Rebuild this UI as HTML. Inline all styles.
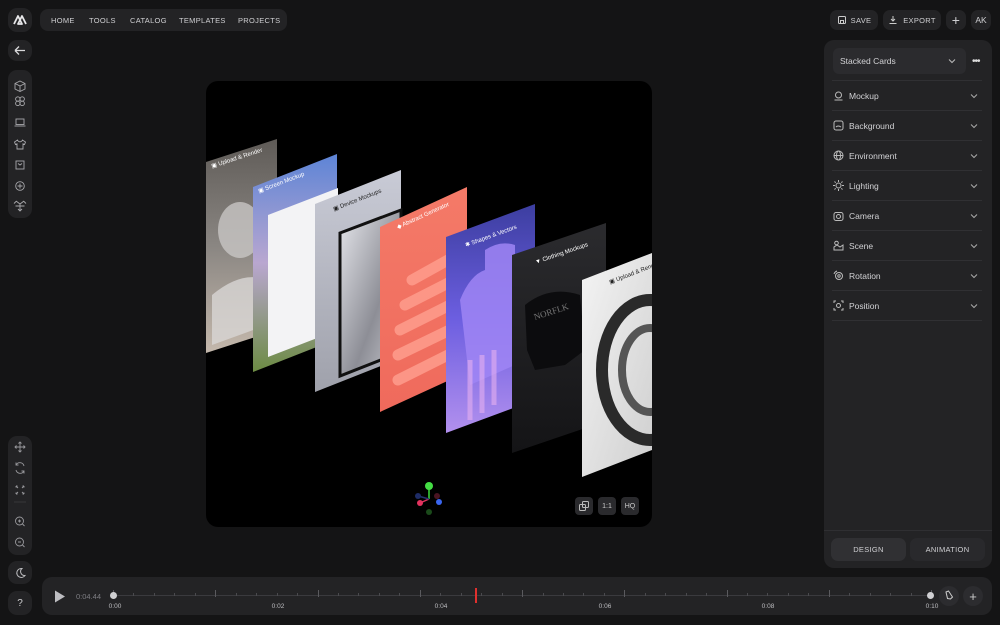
<!DOCTYPE html>
<html><head><meta charset="utf-8"><style>
*{margin:0;padding:0;box-sizing:border-box}
body{width:1000px;height:625px;background:#141415;font-family:"Liberation Sans",sans-serif;color:#c9c9cc;position:relative;overflow:hidden}
.box{position:absolute;background:#232325;border-radius:9px}
.nav{font-size:7.5px;letter-spacing:.3px;color:#cfcfd2;display:flex;align-items:center}
.row{position:absolute;left:832px;width:150px;height:30px;border-bottom:1px solid #303033;display:flex;align-items:center;font-size:8.5px;color:#d2d2d5}
.row svg.i{margin:0 5px 0 1px}
.row .ch{position:absolute;right:4px}
.lbl{position:absolute;top:603px;font-size:6.5px;color:#bdbdc0;transform:translateX(-50%)}
.tick{position:absolute;width:1px;background:#4a4a4e}
</style></head><body>

<div class="box" style="left:8px;top:8px;width:24px;height:24px"><svg width="24" height="24" viewBox="0 0 24 24"><path d="M6 16 L10 8 L12 12 M12 12 L14 8 L18 16 M10 16 L12 12 L14 16Z" stroke="#e8e8ea" stroke-width="1.8" fill="none" stroke-linejoin="round"/></svg></div>
<div class="box" style="left:8px;top:40px;width:24px;height:21px"><svg width="24" height="21"><path d="M7 10.5H17M7 10.5L11 6.5M7 10.5L11 14.5" stroke="#d8d8da" stroke-width="1.3" fill="none"/></svg></div>
<div class="box" style="left:8px;top:70px;width:24px;height:148px">
 <svg width="24" height="148" fill="none" stroke="#a8a8ac" stroke-width=".9">
  <path d="M12 76 l5 2.5v5.5l-5 2.5-5-2.5v-5.5z M7 78.5l5 2.5 5-2.5 M12 81v5" transform="translate(0,-65)"/>
  <g transform="translate(0,29)"><circle cx="9.8" cy="0" r="2.2"/><circle cx="14.2" cy="0" r="2.2"/><circle cx="9.8" cy="4.4" r="2.2"/><circle cx="14.2" cy="4.4" r="2.2"/></g>
  <rect x="8" y="49" width="8" height="5.5"/><path d="M6.5 56h11"/>
  <path d="M9.5 70l-3 2 1 2.5 1.5-.7V79h6v-5.2l1.5.7 1-2.5-3-2c-.5 1.2-1.5 1.8-2.5 1.8s-2-.6-2.5-1.8z"/>
  <rect x="8" y="91" width="8" height="8"/><path d="M10 93.5l2 1.5 2-1.5"/>
  <circle cx="12" cy="116" r="4.3"/><path d="M12 113.5v5M9.5 116h5"/>
  <path d="M8 131l4 3 4-3M12 134v7M7.5 136h9M6 133.5l2-2M18 133.5l-2-2M10 139l2 2 2-2"/>
 </svg>
</div>
<div class="box" style="left:8px;top:436px;width:24px;height:119px">
 <svg width="24" height="119" fill="none" stroke="#99999d" stroke-width=".9">
  <path d="M12 6v10M7 11h10M10.5 7.5L12 6l1.5 1.5M10.5 14.5L12 16l1.5-1.5M8.5 9.5L7 11l1.5 1.5M15.5 9.5L17 11l-1.5 1.5"/>
  <path d="M16 30a4.3 4.3 0 0 0-8-1M8 34a4.3 4.3 0 0 0 8 1M8 26.5v2.5h2.5M16 37.5V35h-2.5"/>
  <path d="M8 50l2 2M8 50v1.5M8 50h1.5M16 50l-2 2M16 50v1.5M16 50h-1.5M8 58l2-2M8 58v-1.5M8 58h1.5M16 58l-2-2M16 58v-1.5M16 58h-1.5"/>
  <path d="M6 66h12" stroke="#3a3a3d"/>
  <circle cx="11.5" cy="85" r="4"/><path d="M14.5 88l2 2M10 85h3M11.5 83.5v3"/>
  <circle cx="11.5" cy="106" r="4"/><path d="M14.5 109l2 2M10 106h3"/>
 </svg>
</div>
<div class="box" style="left:8px;top:561px;width:24px;height:23px"><svg width="24" height="23"><path d="M14 7.5a4.5 4.5 0 1 0 3 7 4 4 0 0 1-3-7z" stroke="#bdbdc0" fill="none"/></svg></div>
<div class="box" style="left:8px;top:591px;width:24px;height:24px;display:flex;align-items:center;justify-content:center;font-size:10px;color:#d0d0d2">?</div>

<div class="box nav" style="left:40px;top:9px;width:247px;height:22px;border-radius:8px">
 <span style="position:absolute;left:11px">HOME</span><span style="position:absolute;left:49px">TOOLS</span><span style="position:absolute;left:90px">CATALOG</span><span style="position:absolute;left:139px">TEMPLATES</span><span style="position:absolute;left:198px">PROJECTS</span>
</div>
<div class="box nav" style="left:830px;top:10px;width:48px;height:20px;border-radius:7px;justify-content:center"><svg width="10" height="10" style="margin-right:4px"><rect x="1.5" y="1.5" width="7" height="7" rx="1" stroke="#ccc" fill="none"/><rect x="3.5" y="5.5" width="3" height="3" stroke="#ccc" fill="none"/></svg>SAVE</div>
<div class="box nav" style="left:883px;top:10px;width:58px;height:20px;border-radius:7px;justify-content:center"><svg width="10" height="10" style="margin-right:5px"><path d="M5 1v5M3 4l2 2 2-2M1.5 8.5h7" stroke="#ccc" fill="none"/></svg>EXPORT</div>
<div class="box nav" style="left:946px;top:10px;width:20px;height:20px;border-radius:7px;justify-content:center;font-size:14px">+</div>
<div class="box nav" style="left:971px;top:10px;width:20px;height:20px;border-radius:7px;justify-content:center;font-size:8.5px;letter-spacing:0">AK</div>

<div style="position:absolute;left:206px;top:81px;width:446px;height:446px;background:#000;border-radius:12px;overflow:hidden">
<svg width="446" height="446" viewBox="206 81 446 446">
<defs>
 <linearGradient id="g1" x1="0" y1="0" x2="0" y2="1"><stop offset="0" stop-color="#5f5b57"/><stop offset=".5" stop-color="#8a8682"/><stop offset="1" stop-color="#c4b8ac"/></linearGradient>
 <linearGradient id="g2" x1="0" y1="0" x2="0" y2="1"><stop offset="0" stop-color="#5d84d6"/><stop offset=".5" stop-color="#b9a7d0"/><stop offset="1" stop-color="#6c8b43"/></linearGradient>
 <linearGradient id="g3" x1="0" y1="0" x2="0" y2="1"><stop offset="0" stop-color="#c9cbd6"/><stop offset="1" stop-color="#9fa1ab"/></linearGradient>
 <linearGradient id="g3b" x1="0" y1="0" x2="1" y2="1"><stop offset="0" stop-color="#e6e7ec"/><stop offset=".6" stop-color="#8d8e96"/><stop offset="1" stop-color="#c9cad0"/></linearGradient>
 <linearGradient id="g4" x1="0" y1="0" x2="0" y2="1"><stop offset="0" stop-color="#f47a68"/><stop offset="1" stop-color="#ef6a5c"/></linearGradient>
 <linearGradient id="g5" x1="0" y1="0" x2="0" y2="1"><stop offset="0" stop-color="#3c3ea0"/><stop offset=".5" stop-color="#6c5ee0"/><stop offset="1" stop-color="#b290ee"/></linearGradient>
 <linearGradient id="g6" x1="0" y1="0" x2="0" y2="1"><stop offset="0" stop-color="#2b2b2e"/><stop offset="1" stop-color="#141416"/></linearGradient>
 <linearGradient id="g7" x1="0" y1="0" x2="1" y2="1"><stop offset="0" stop-color="#f4f4f4"/><stop offset="1" stop-color="#cfcfcf"/></linearGradient>
</defs>
<polygon points="206,162 277,139 277,330 206,353" fill="url(#g1)"/>
<ellipse cx="240" cy="230" rx="22" ry="28" fill="#c8c6c4" opacity=".8"/><path d="M212 295 q30-25 55-15 v45 l-55 20z" fill="#d8d6d4" opacity=".8"/>
<polygon points="253,187 337,154 337,339 253,372" fill="url(#g2)"/>
<polygon points="268,215 338,188 338,330 268,357" fill="#f3f3f5"/>
<polygon points="315,204 401,170 401,358 315,392" fill="url(#g3)"/>
<path d="M340 233 L401 210 L401 352 L340 376 Z" fill="url(#g3b)" stroke="#111" stroke-width="3"/>
<polygon points="380,227 467,187 467,372 380,412" fill="url(#g4)"/>
<g stroke="#ff9d8d" stroke-width="11" stroke-linecap="round" opacity=".85">
 <path d="M412 280 l45 -25"/><path d="M405 305 l55 -28"/><path d="M400 330 l60 -30"/><path d="M398 355 l62 -30"/><path d="M398 380 l50 -25"/>
</g>
<polygon points="446,237 535,204 535,400 446,433" fill="url(#g5)"/>
<path d="M460 300 q10-25 25-30 v-20 q15-10 30-5 v120 l-45 20 z" fill="#9f85f5" opacity=".85"/>
<path d="M470 360 v60 M482 355 v58 M494 350 v55" stroke="#e6b0f0" stroke-width="5" opacity=".6"/>
<polygon points="512,255 606,223 606,421 512,453" fill="url(#g6)"/>
<path d="M525 305 q25-20 55-10 l5 55 -20 15 -30 5 -8-20z" fill="#0c0c0e"/>
<text x="535" y="320" font-size="9" fill="#777" transform="rotate(-18 535 320)" font-family="Liberation Serif">NORFLK</text>
<polygon points="582,280 652,253 652,450 582,477" fill="url(#g7)"/>
<ellipse cx="650" cy="370" rx="48" ry="70" fill="none" stroke="#2a2a2a" stroke-width="12"/>
<ellipse cx="650" cy="370" rx="28" ry="42" fill="none" stroke="#555" stroke-width="8"/>
<g font-size="6" fill="#fff" font-family="Liberation Sans">
 <text x="212" y="168" transform="rotate(-18 212 168)">▣ Upload &amp; Render</text>
 <text x="259" y="193" transform="rotate(-21 259 193)">▣ Screen Mockup</text>
 <text x="334" y="211" transform="rotate(-21.5 334 211)" fill="#222">▣ Device Mockups</text>
 <text x="398" y="229" transform="rotate(-24.5 398 229)">◆ Abstract Generator</text>
 <text x="466" y="247" transform="rotate(-20 466 247)">✱ Shapes &amp; Vectors</text>
 <text x="536" y="264" transform="rotate(-19 536 264)">▼ Clothing Mockups</text>
 <text x="610" y="284" transform="rotate(-21 610 284)" fill="#222">▣ Upload &amp; Render</text>
</g>
<line x1="429" y1="486" x2="429" y2="499" stroke="#3ddc3d" stroke-width="1.5"/>
<line x1="429" y1="499" x2="420" y2="503" stroke="#e0325e" stroke-width="1.5"/>
<line x1="429" y1="499" x2="418" y2="496" stroke="#23306e" stroke-width="1.5"/>
<circle cx="429" cy="486" r="4" fill="#44dd44"/><circle cx="418" cy="496" r="3" fill="#1e2c66"/><circle cx="420" cy="503" r="3" fill="#e2325e"/>
<circle cx="437" cy="496" r="3" fill="#4a1422"/><circle cx="439" cy="502" r="3" fill="#3a66f0"/><circle cx="429" cy="512" r="3" fill="#1a4a1a"/>
</svg>
<div class="box" style="left:369px;top:416px;width:18px;height:18px;border-radius:4px;background:#2a2a2d"><svg width="18" height="18" fill="none" stroke="#bbb"><rect x="4.5" y="7.5" width="6" height="6" rx="1"/><rect x="7.5" y="4.5" width="6" height="6" rx="1"/></svg></div>
<div class="box" style="left:392px;top:416px;width:18px;height:18px;border-radius:4px;background:#2a2a2d;font-size:7px;display:flex;align-items:center;justify-content:center;color:#ccc">1:1</div>
<div class="box" style="left:415px;top:416px;width:18px;height:18px;border-radius:4px;background:#2a2a2d;font-size:7px;display:flex;align-items:center;justify-content:center;color:#ccc">HQ</div>
</div>

<div class="box" style="left:824px;top:40px;width:168px;height:528px;border-radius:10px"></div>
<div style="position:absolute;left:833px;top:48px;width:133px;height:26px;background:#2b2b2e;border-radius:6px;font-size:8.5px;color:#d2d2d5;display:flex;align-items:center;padding-left:7px">Stacked Cards<svg width="8" height="6" style="position:absolute;right:10px"><path d="M1 1.5l3 3 3-3" stroke="#bbb" fill="none"/></svg></div>
<div style="position:absolute;left:972px;top:56px;font-size:10px;color:#ddd;letter-spacing:-1px">•••</div>
<div style="position:absolute;left:832px;top:80px;width:150px;height:1px;background:#303033"></div>
<div class="row" style="top:81px"><svg class="i" width="11" height="11" fill="none" stroke="#bbb"><circle cx="5.5" cy="5" r="3"/><path d="M1.5 10h8"/></svg>Mockup<svg class="ch" width="8" height="6"><path d="M1 1.5l3 3 3-3" stroke="#aaa" fill="none"/></svg></div>
<div class="row" style="top:111px"><svg class="i" width="11" height="11" fill="none" stroke="#bbb"><rect x="1" y="1" width="9" height="9" rx="2"/><path d="M3 7q2-2 5 0"/></svg>Background<svg class="ch" width="8" height="6"><path d="M1 1.5l3 3 3-3" stroke="#aaa" fill="none"/></svg></div>
<div class="row" style="top:141px"><svg class="i" width="11" height="11" fill="none" stroke="#bbb"><circle cx="5.5" cy="5.5" r="4.5"/><ellipse cx="5.5" cy="5.5" rx="2" ry="4.5"/><path d="M1 5.5h9"/></svg>Environment<svg class="ch" width="8" height="6"><path d="M1 1.5l3 3 3-3" stroke="#aaa" fill="none"/></svg></div>
<div class="row" style="top:171px"><svg class="i" width="11" height="11" fill="none" stroke="#bbb"><circle cx="5.5" cy="5.5" r="2.5"/><path d="M5.5 0v2M5.5 9v2M0 5.5h2M9 5.5h2M1.5 1.5l1.2 1.2M8.3 8.3l1.2 1.2M1.5 9.5l1.2-1.2M8.3 2.7l1.2-1.2"/></svg>Lighting<svg class="ch" width="8" height="6"><path d="M1 1.5l3 3 3-3" stroke="#aaa" fill="none"/></svg></div>
<div class="row" style="top:201px"><svg class="i" width="11" height="11" fill="none" stroke="#bbb"><rect x="1" y="2.5" width="9" height="8" rx="2"/><circle cx="5.5" cy="6.5" r="2"/></svg>Camera<svg class="ch" width="8" height="6"><path d="M1 1.5l3 3 3-3" stroke="#aaa" fill="none"/></svg></div>
<div class="row" style="top:231px"><svg class="i" width="11" height="11" fill="none" stroke="#bbb"><circle cx="3.5" cy="3" r="1.8"/><path d="M1 10v-3l3-2 3 2 3-2v5z"/></svg>Scene<svg class="ch" width="8" height="6"><path d="M1 1.5l3 3 3-3" stroke="#aaa" fill="none"/></svg></div>
<div class="row" style="top:261px"><svg class="i" width="11" height="11" fill="none" stroke="#bbb"><circle cx="6" cy="6" r="3.5"/><circle cx="6" cy="6" r="1.2"/><path d="M1 4a5 5 0 0 1 3-3"/></svg>Rotation<svg class="ch" width="8" height="6"><path d="M1 1.5l3 3 3-3" stroke="#aaa" fill="none"/></svg></div>
<div class="row" style="top:291px"><svg class="i" width="11" height="11" fill="none" stroke="#bbb"><path d="M1 3V1h2M8 1h2v2M10 8v2H8M3 10H1V8"/><circle cx="5.5" cy="5.5" r="2"/></svg>Position<svg class="ch" width="8" height="6"><path d="M1 1.5l3 3 3-3" stroke="#aaa" fill="none"/></svg></div>
<div style="position:absolute;left:824px;top:530px;width:168px;height:1px;background:#2f2f32"></div>
<div style="position:absolute;left:831px;top:538px;width:75px;height:23px;background:#303033;border-radius:7px;font-size:7.5px;letter-spacing:.3px;color:#cfcfd2;display:flex;align-items:center;justify-content:center">DESIGN</div>
<div style="position:absolute;left:910px;top:538px;width:75px;height:23px;background:#29292c;border-radius:7px;font-size:7.5px;letter-spacing:.3px;color:#cfcfd2;display:flex;align-items:center;justify-content:center">ANIMATION</div>

<div class="box" style="left:42px;top:577px;width:950px;height:38px;border-radius:10px"></div>
<svg style="position:absolute;left:54px;top:590px" width="12" height="13"><path d="M1 0.5L11 6.5L1 12.5Z" fill="#bdbdc1"/></svg>
<div style="position:absolute;left:76px;top:592px;font-size:7.5px;color:#7d7d82">0:04.44</div>
<div style="position:absolute;left:113px;top:595px;width:818px;height:1px;background:#3a3a3e"></div>
<div id="ticks"></div>
<div style="position:absolute;left:110px;top:592px;width:7px;height:7px;border-radius:50%;background:#cfcfd2"></div>
<div style="position:absolute;left:927px;top:592px;width:7px;height:7px;border-radius:50%;background:#cfcfd2"></div>
<div style="position:absolute;left:475px;top:588px;width:2px;height:15px;background:#e0302e"></div>
<div class="lbl" style="left:115px">0:00</div><div class="lbl" style="left:278px">0:02</div><div class="lbl" style="left:441px">0:04</div><div class="lbl" style="left:605px">0:06</div><div class="lbl" style="left:768px">0:08</div><div class="lbl" style="left:932px">0:10</div>
<div style="position:absolute;left:939px;top:586px;width:20px;height:20px;border-radius:50%;background:#2c2c2f"><svg width="20" height="20" fill="none" stroke="#ccc"><path d="M7 6l2.5-1 4 6-2 2-3-.5z"/></svg></div>
<div style="position:absolute;left:963px;top:586px;width:20px;height:20px;border-radius:50%;background:#2c2c2f;color:#ccc;font-size:13px;display:flex;align-items:center;justify-content:center">+</div>
<script>
var t=document.getElementById('ticks'),h='';
for(var i=0;i<=40;i++){var x=113+i*818/40;var big=i%5==0;h+='<div class="tick" style="left:'+x.toFixed(1)+'px;top:'+(big?590:593)+'px;height:'+(big?7:3)+'px;'+(big?'background:#5a5a5e':'')+'"></div>';}
t.innerHTML=h;
</script>
</body></html>
